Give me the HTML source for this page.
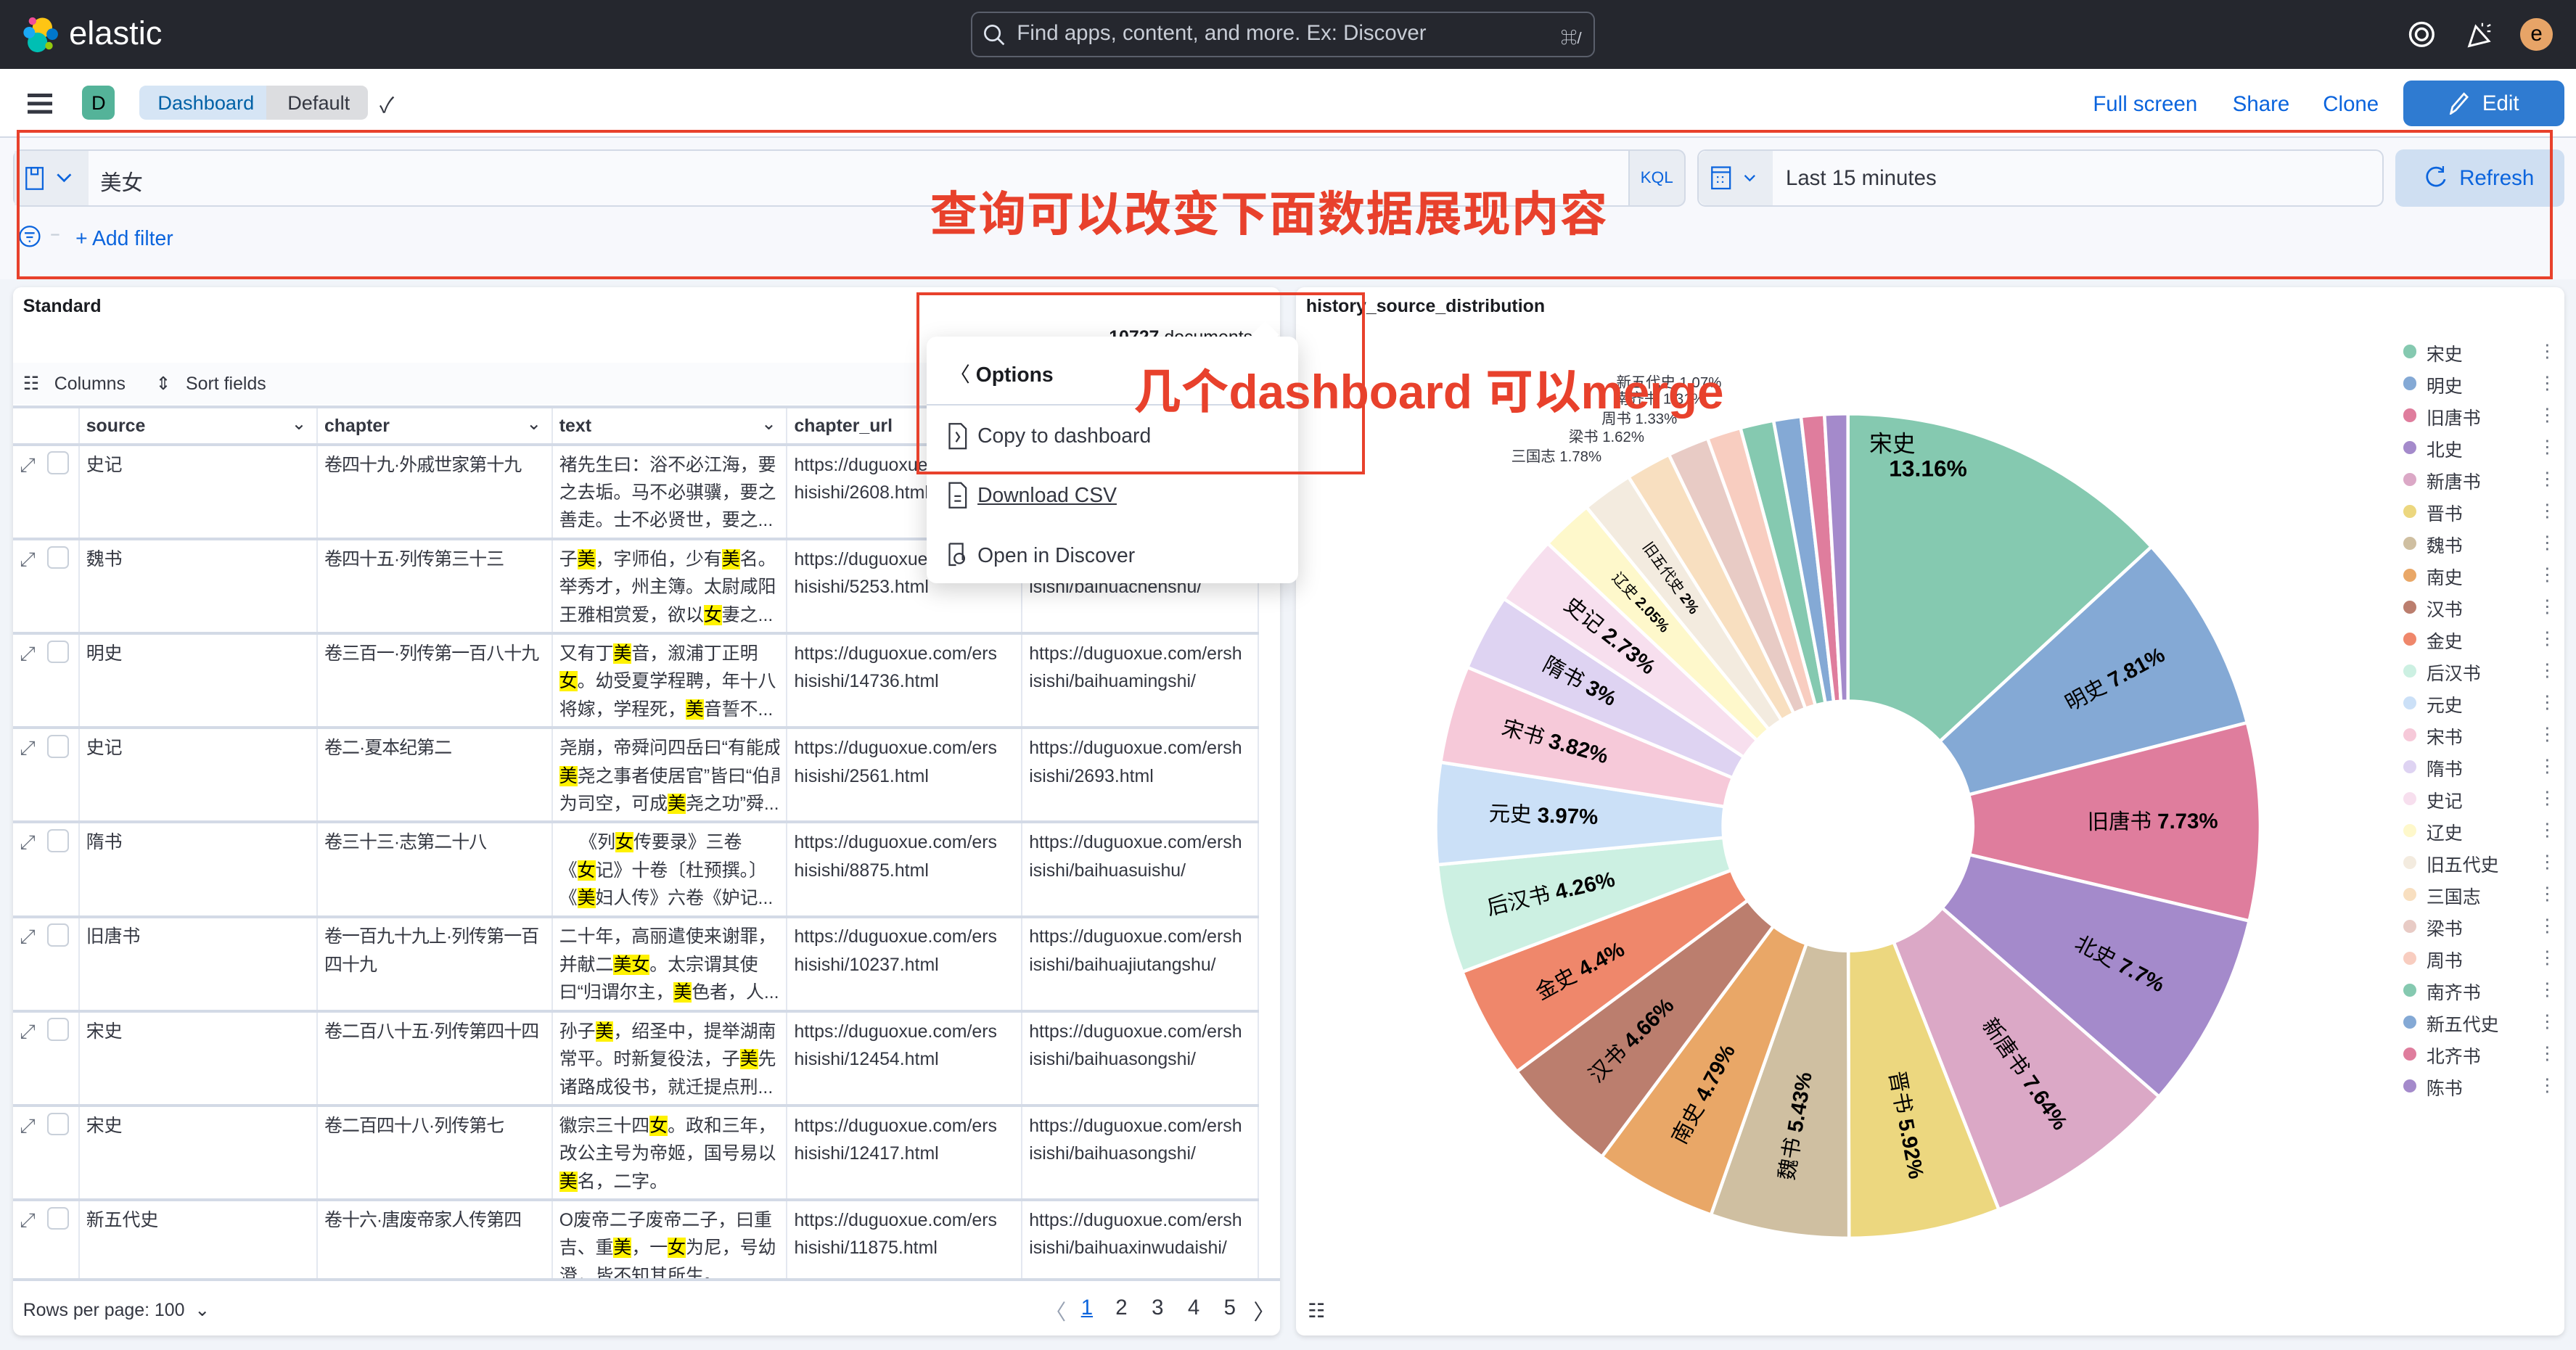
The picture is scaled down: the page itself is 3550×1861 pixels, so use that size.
<!DOCTYPE html>
<html><head><meta charset="utf-8">
<style>
html{zoom:2.2640}
*{box-sizing:border-box;margin:0;padding:0}
body{width:1568px;height:822px;overflow:hidden;background:#f1f4f9;font-family:"Liberation Sans","Noto Sans CJK SC",sans-serif;color:#343741;position:relative;font-size:12px}
.abs{position:absolute}
.hdr{left:0;top:0;width:1568px;height:42px;background:#25272e}
.bar2{left:0;top:42px;width:1568px;height:42px;background:#fff;border-bottom:1px solid #d3dae6}
.qarea{left:0;top:84px;width:1568px;height:86px;background:#f7f8fc}
.lnk{color:#0b64dd;font-size:13px;top:56px}
.panel{background:#fff;border-radius:5px;box-shadow:0 1px 3px rgba(0,0,0,.12)}
table{border-collapse:collapse;table-layout:fixed}
td,th{border-right:1px solid #e4e8f0;border-bottom:2px solid #d3dae6;vertical-align:top;text-align:left;font-size:11px;font-weight:normal;padding:3px 4px 1px;line-height:17px;color:#343741}
th{font-weight:bold;height:21px;padding:2px 4px;line-height:17px;position:relative}
th .cv{position:absolute;right:6px;top:1px;font-weight:normal;color:#343741}
tr.r{height:57.5px}
td .cl{height:51px;overflow:hidden;word-break:break-all}
td .ch{letter-spacing:-0.4px}
mark{background:#fff200;color:#000}
.leg{left:1463px;font-size:11px;color:#343741}
.leg i{position:absolute;left:0;top:3px;width:8px;height:8px;border-radius:50%}
.leg span{position:absolute;left:14px;top:0;white-space:nowrap}
.leg b{position:absolute;left:82px;top:0;font-weight:normal;color:#69707d;letter-spacing:-1px}
.pg{position:absolute;top:789px;font-size:13px;color:#343741}
</style></head><body>
<div class="abs hdr"></div>
<svg class="abs" style="left:13px;top:9px" width="24" height="24" viewBox="0 0 24 24">
<circle cx="13" cy="8" r="6" fill="#fec514"/><circle cx="10" cy="17" r="6" fill="#00bfb3"/><circle cx="5" cy="11" r="3.5" fill="#1ba9f5"/><circle cx="19" cy="12" r="3.5" fill="#0077cc"/><circle cx="7" cy="4" r="2.3" fill="#f04e98"/><circle cx="17" cy="19" r="2.3" fill="#93c90e"/></svg>
<div class="abs" style="left:42px;top:9px;color:#fff;font-size:20px">elastic</div>
<div class="abs" style="left:591px;top:7px;width:380px;height:28px;border:1px solid #5a5f6b;border-radius:5px;background:#25272e"></div>
<svg class="abs" style="left:598px;top:14px" width="14" height="14" viewBox="0 0 14 14"><circle cx="6" cy="6" r="4.5" fill="none" stroke="#dfe5ef" stroke-width="1.2"/><path d="M9.5 9.5L13 13" stroke="#dfe5ef" stroke-width="1.2"/></svg>
<div class="abs" style="left:619px;top:13px;color:#c8cdd6;font-size:13px">Find apps, content, and more. Ex: Discover</div>
<div class="abs" style="left:950px;top:15px;color:#c8cdd6;font-size:10px">⌘/</div>
<svg class="abs" style="left:1465px;top:12px" width="18" height="18" viewBox="0 0 18 18"><circle cx="9" cy="9" r="7" fill="none" stroke="#fff" stroke-width="1.5"/><circle cx="9" cy="9" r="3.5" fill="none" stroke="#fff" stroke-width="1.5"/></svg>
<svg class="abs" style="left:1500px;top:11px" width="18" height="20" viewBox="0 0 18 20"><path d="M3 17L7 5l8 9z" fill="none" stroke="#fff" stroke-width="1.3"/><path d="M11 3v2M14 5l2-1M14 8h2" stroke="#fff" stroke-width="1"/></svg>
<div class="abs" style="left:1534px;top:11px;width:20px;height:20px;border-radius:50%;background:#e7a467;text-align:center;font-size:13px;line-height:19px;color:#000">e</div>

<div class="abs bar2"></div>
<div class="abs" style="left:17px;top:57px;width:15px;height:2px;background:#343741;box-shadow:0 5px 0 #343741,0 10px 0 #343741"></div>
<div class="abs" style="left:50px;top:52px;width:20px;height:21px;border-radius:4px;background:#54b399;text-align:center;font-size:12px;line-height:21px;color:#000">D</div>
<div class="abs" style="left:85px;top:52px;width:80px;height:21px;background:#d6e5f5;border-radius:4px 0 0 4px;color:#0061a6;font-size:12px;line-height:21px;padding-left:11px">Dashboard</div>
<div class="abs" style="left:162px;top:52px;width:62px;height:21px;background:#dcdde0;border-radius:0 4px 4px 0;color:#343741;font-size:12px;line-height:21px;padding-left:13px">Default</div>
<div class="abs" style="left:231px;top:54px;font-size:13px;color:#343741">✓</div>
<div class="abs lnk" style="left:1274px">Full screen</div>
<div class="abs lnk" style="left:1359px">Share</div>
<div class="abs lnk" style="left:1414px">Clone</div>
<div class="abs" style="left:1463px;top:49px;width:98px;height:28px;background:#2f7bd1;border-radius:5px;color:#fff;font-size:13px;line-height:28px;padding-left:48px">Edit</div>
<svg class="abs" style="left:1490px;top:56px" width="13" height="14" viewBox="0 0 13 14"><path d="M2 13l1-4 7-8 2 2-7 8z" fill="none" stroke="#fff" stroke-width="1.2"/></svg>

<div class="abs qarea"></div>
<div class="abs" style="left:8px;top:91px;width:984px;height:35px;border:1px solid #d3dae6;border-radius:5px 0 0 5px;background:#f9fafd"></div>
<div class="abs" style="left:9px;top:92px;width:45px;height:33px;background:#e9edf3"></div>
<svg class="abs" style="left:15px;top:101px" width="32" height="16" viewBox="0 0 32 16"><rect x="1" y="1" width="10" height="13" fill="none" stroke="#0b64dd" stroke-width="1"/><rect x="4" y="1" width="4" height="4" fill="none" stroke="#0b64dd"/><path d="M20 5l4 4 4-4" fill="none" stroke="#0b64dd" stroke-width="1.2"/></svg>
<div class="abs" style="left:61px;top:101px;font-size:13px;color:#343741">美女</div>
<div class="abs" style="left:991px;top:91px;width:35px;height:35px;background:#e9edf3;border:1px solid #d3dae6;border-radius:0 5px 5px 0;color:#0b64dd;font-size:10px;line-height:33px;text-align:center">KQL</div>
<div class="abs" style="left:1033px;top:91px;width:418px;height:35px;border:1px solid #d3dae6;border-radius:5px;background:#f9fafd"></div>
<div class="abs" style="left:1034px;top:92px;width:45px;height:33px;background:#e9edf3;border-radius:5px 0 0 5px"></div>
<svg class="abs" style="left:1041px;top:100px" width="34" height="18" viewBox="0 0 34 18"><rect x="1" y="2" width="11" height="13" fill="none" stroke="#0b64dd"/><path d="M1 5h11M4 8h1M7 8h1M10 8h0M4 11h1M7 11h1" stroke="#0b64dd"/><path d="M21 7l3 3 3-3" fill="none" stroke="#0b64dd"/></svg>
<div class="abs" style="left:1087px;top:101px;font-size:13px;color:#343741">Last 15 minutes</div>
<div class="abs" style="left:1458px;top:91px;width:103px;height:35px;background:#cfdff2;border-radius:5px;color:#0b64dd;font-size:13px;line-height:35px;padding-left:39px">Refresh</div>
<svg class="abs" style="left:1476px;top:101px" width="14" height="14" viewBox="0 0 14 14"><path d="M11 3A5.5 5.5 0 1 0 12 8" fill="none" stroke="#0b64dd" stroke-width="1.2"/><path d="M11 0v3.5H8" fill="none" stroke="#0b64dd"/></svg>
<svg class="abs" style="left:11px;top:137px" width="30" height="14" viewBox="0 0 30 14"><circle cx="7" cy="7" r="6" fill="none" stroke="#0b64dd"/><path d="M4 5h6M5 7.5h4M6.5 10h1" stroke="#0b64dd"/><path d="M20 6h5" stroke="#c9d0da"/></svg>
<div class="abs" style="left:46px;top:138px;font-size:12.5px;color:#0b64dd">+ Add filter</div>
<div class="abs" style="left:10px;top:79px;width:1544px;height:91px;border:2px solid #e8412c"></div>
<div class="abs" style="left:566px;top:107px;font-size:29px;font-weight:bold;color:#e8412c;letter-spacing:0.5px">查询可以改变下面数据展现内容</div>

<!-- left panel -->
<div class="abs panel" style="left:8px;top:175px;width:771px;height:638px"></div>
<div class="abs" style="left:14px;top:180px;font-size:11px;font-weight:bold;color:#1a1c21">Standard</div>
<div class="abs" style="left:675px;top:199px;font-size:11px;color:#1a1c21"><b>10727</b> documents</div>
<div class="abs" style="left:8px;top:221px;width:771px;height:25px;background:#fafbfd"></div>
<div class="abs" style="left:14px;top:227px;font-size:11px;color:#343741">☷&nbsp;&nbsp; Columns &nbsp;&nbsp;&nbsp;&nbsp; ⇕&nbsp;&nbsp; Sort fields</div>
<div class="abs" style="left:8px;top:247px;width:771px;height:533px;overflow:hidden;border-bottom:2px solid #d3dae6">
<table style="width:758px">
<colgroup><col style="width:40px"><col style="width:145px"><col style="width:143px"><col style="width:143px"><col style="width:143px"><col style="width:144px"></colgroup>
<tr><th style="border-top:2px solid #d3dae6"></th><th style="border-top:2px solid #d3dae6">source<span class="cv">⌄</span></th><th style="border-top:2px solid #d3dae6">chapter<span class="cv">⌄</span></th><th style="border-top:2px solid #d3dae6">text<span class="cv">⌄</span></th><th style="border-top:2px solid #d3dae6">chapter_url</th><th style="border-top:2px solid #d3dae6"></th></tr>
<tbody id="tb"></tbody>
</table></div>
<div class="abs" style="left:14px;top:791px;font-size:11px;color:#343741">Rows per page: 100 &nbsp;⌄</div>
<span class="pg" style="left:636px;color:#98a2b3">〈</span>
<span class="pg" style="left:658px;color:#0b64dd;text-decoration:underline">1</span>
<span class="pg" style="left:679px">2</span>
<span class="pg" style="left:701px">3</span>
<span class="pg" style="left:723px">4</span>
<span class="pg" style="left:745px">5</span>
<span class="pg" style="left:763px">〉</span>

<!-- right panel -->
<div class="abs panel" style="left:789px;top:175px;width:772px;height:638px"></div>
<div class="abs" style="left:795px;top:180px;font-size:11px;font-weight:bold;color:#1a1c21">history_source_distribution</div>
<div class="abs" style="left:796px;top:791px;font-size:12px;color:#343741">☷</div>
<svg class="abs" style="left:789px;top:175px" width="772" height="638" id="pie"></svg>
<div id="legend"></div>

<!-- popover -->
<div class="abs" style="left:564px;top:205px;width:226px;height:150px;background:#fff;border-radius:6px;box-shadow:0 4px 14px rgba(0,0,0,.18)"></div>
<div class="abs" style="left:764px;top:198px;width:12px;height:12px;background:#fff;transform:rotate(45deg)"></div>
<div class="abs" style="left:578px;top:218px;font-size:12.5px;color:#1a1c21"><span style="font-weight:normal">〈</span>&nbsp;<b>Options</b></div>
<div class="abs" style="left:564px;top:246px;width:226px;height:1px;background:#d3dae6"></div>
<svg class="abs" style="left:576px;top:257px" width="14" height="100" viewBox="0 0 14 100"><path d="M2 1h7l3 3v12H2z" fill="none" stroke="#343741"/><path d="M6 6l2 3-2 3" fill="none" stroke="#343741"/><path d="M2 37h7l3 3v12H2z" fill="none" stroke="#343741"/><path d="M5 45h4M5 48h4" stroke="#343741"/><path d="M2 74h8v10M2 74v13h4" fill="none" stroke="#343741"/><circle cx="8" cy="83" r="3" fill="none" stroke="#343741"/></svg>
<div class="abs" style="left:595px;top:258px;font-size:12.5px;color:#343741">Copy to dashboard</div>
<div class="abs" style="left:595px;top:294px;font-size:12.5px;color:#343741;text-decoration:underline">Download CSV</div>
<div class="abs" style="left:595px;top:331px;font-size:12.5px;color:#343741">Open in Discover</div>
<div class="abs" style="left:558px;top:178px;width:273px;height:111px;border:2px solid #e8412c"></div>
<div class="abs" style="left:690px;top:215px;font-size:29px;font-weight:bold;color:#e8412c;white-space:nowrap">几个dashboard 可以merge</div>

<script>
var rows=[
["史记","卷四十九·外戚世家第十九","褚先生曰：浴不必江海，要之去垢。马不必骐骥，要之善走。士不必贤世，要之...","2608","baihuashiji/"],
["魏书","卷四十五·列传第三十三","子<mark>美</mark>，字师伯，少有<mark>美</mark>名。举秀才，州主簿。太尉咸阳王雅相赏爱，欲以<mark>女</mark>妻之...","5253","baihuachenshu/"],
["明史","卷三百一·列传第一百八十九","又有丁<mark>美</mark>音，溆浦丁正明<mark>女</mark>。幼受夏学程聘，年十八将嫁，学程死，<mark>美</mark>音誓不...","14736","baihuamingshi/"],
["史记","卷二·夏本纪第二","尧崩，帝舜问四岳曰“有能成<br><mark>美</mark>尧之事者使居官”皆曰“伯禹<br>为司空，可成<mark>美</mark>尧之功”舜...","2561","2693.html"],
["隋书","卷三十三·志第二十八","&nbsp;&nbsp;&nbsp;&nbsp;《列<mark>女</mark>传要录》三卷<br>《<mark>女</mark>记》十卷〔杜预撰。〕<br>《<mark>美</mark>妇人传》六卷《妒记...","8875","baihuasuishu/"],
["旧唐书","卷一百九十九上·列传第一百四十九","二十年，高丽遣使来谢罪，并献二<mark>美女</mark>。太宗谓其使曰“归谓尔主，<mark>美</mark>色者，人...","10237","baihuajiutangshu/"],
["宋史","卷二百八十五·列传第四十四","孙子<mark>美</mark>，绍圣中，提举湖南常平。时新复役法，子<mark>美</mark>先诸路成役书，就迁提点刑...","12454","baihuasongshi/"],
["宋史","卷二百四十八·列传第七","徽宗三十四<mark>女</mark>。政和三年，改公主号为帝姬，国号易以<mark>美</mark>名，二字。","12417","baihuasongshi/"],
["新五代史","卷十六·唐废帝家人传第四","O废帝二子废帝二子，曰重吉、重<mark>美</mark>，一<mark>女</mark>为尼，号幼澄，皆不知其所生。","11875","baihuaxinwudaishi/"]];
var h="";
rows.forEach(function(r){
h+='<tr class="r"><td style="color:#69707d;font-size:12px">⤢ <span style="display:inline-block;width:13px;height:14px;border:1px solid #c9d0da;border-radius:3px;vertical-align:-2px;margin-left:4px"></span></td><td>'+r[0]+'</td><td><div class="cl ch">'+r[1]+'</div></td><td><div class="cl" style="white-space:'+(r[2].indexOf('<br>')>=0?'nowrap':'normal')+'">'+r[2]+'</div></td><td>https://duguoxue.com/ers<br>hisishi/'+r[3]+'.html</td><td>https://duguoxue.com/ersh<br>isishi/'+r[4]+'</td></tr>';});
document.getElementById('tb').innerHTML=h;

var d=[["宋史",13.16,"#85c9b0"],["明史",7.81,"#84a9d5"],["旧唐书",7.73,"#df7d9d"],["北史",7.7,"#a48acb"],["新唐书",7.64,"#dba8c6"],["晋书",5.92,"#ecd77f"],["魏书",5.43,"#cfbfa1"],["南史",4.79,"#e9a767"],["汉书",4.66,"#bb7e6e"],["金史",4.4,"#ef876b"],["后汉书",4.26,"#ccf0e2"],["元史",3.97,"#cbe0f7"],["宋书",3.82,"#f6c9d9"],["隋书",3,"#ded3f2"],["史记",2.73,"#f7dfee"],["辽史",2.05,"#fef8cb"],["旧五代史",2,"#f3ebdf"],["三国志",1.78,"#f8dfc0"],["梁书",1.62,"#e8cbc5"],["周书",1.33,"#f8cdc0"],["南齐书",1.31,"#85c9b0"],["新五代史",1.07,"#84a9d5"],["北齐书",0.91,"#df7d9d"],["陈书",0.91,"#a48acb"]];
var cx=1125-789,cy=503-175,R=251,r=76,s="",a=0;
function pt(ang,rad){var t=ang*Math.PI/180;return [cx+rad*Math.sin(t),cy-rad*Math.cos(t)];}
d.forEach(function(e,i){var b=a+e[1]*3.6;var p1=pt(a,R),p2=pt(b,R),p3=pt(b,r),p4=pt(a,r);var lg=(b-a)>180?1:0;
s+='<path d="M'+p1+'A'+R+' '+R+' 0 '+lg+' 1 '+p2+'L'+p3+'A'+r+' '+r+' 0 '+lg+' 0 '+p4+'Z" fill="'+e[2]+'" stroke="#fff" stroke-width="2"/>';
var m=(a+b)/2;
if(i>0&&i<17){var q=pt(m,(R+r)/2+22);var rot=m<180?m-90:m-270;var fs=i>=15?9:13;
s+='<text x="'+q[0]+'" y="'+q[1]+'" transform="rotate('+rot+' '+q[0]+' '+q[1]+')" text-anchor="middle" dominant-baseline="middle" font-size="'+fs+'" fill="#000" font-family="Liberation Sans,Noto Sans CJK SC,sans-serif">'+e[0]+' <tspan font-weight="bold">'+e[1]+'%</tspan></text>';}
a=b;});
s+='<text x="'+(1138-789)+'" y="'+(275-175)+'" font-size="14" font-family="Liberation Sans,Noto Sans CJK SC,sans-serif">宋史</text><text x="'+(1150-789)+'" y="'+(290-175)+'" font-size="14" font-weight="bold" font-family="Liberation Sans,sans-serif">13.16%</text>';
var ol=[["三国志  1.78%",920,281],["梁书  1.62%",955,269],["周书  1.33%",975,258],["南齐书  1.31%",983,246],["新五代史  1.07%",984,236]];
ol.forEach(function(o){s+='<text x="'+(o[1]-789)+'" y="'+(o[2]-175)+'" font-size="9" fill="#343741" font-family="Liberation Sans,Noto Sans CJK SC,sans-serif">'+o[0]+'</text>';});
document.getElementById('pie').innerHTML=s;
var L="";d.forEach(function(e,i){L+='<div class="abs leg" style="top:'+(207+i*19.45)+'px;width:90px;height:14px"><i style="background:'+e[2]+'"></i><span>'+e[0]+'</span><b>⋮</b></div>';});
document.getElementById('legend').innerHTML=L;
</script>
</body></html>
